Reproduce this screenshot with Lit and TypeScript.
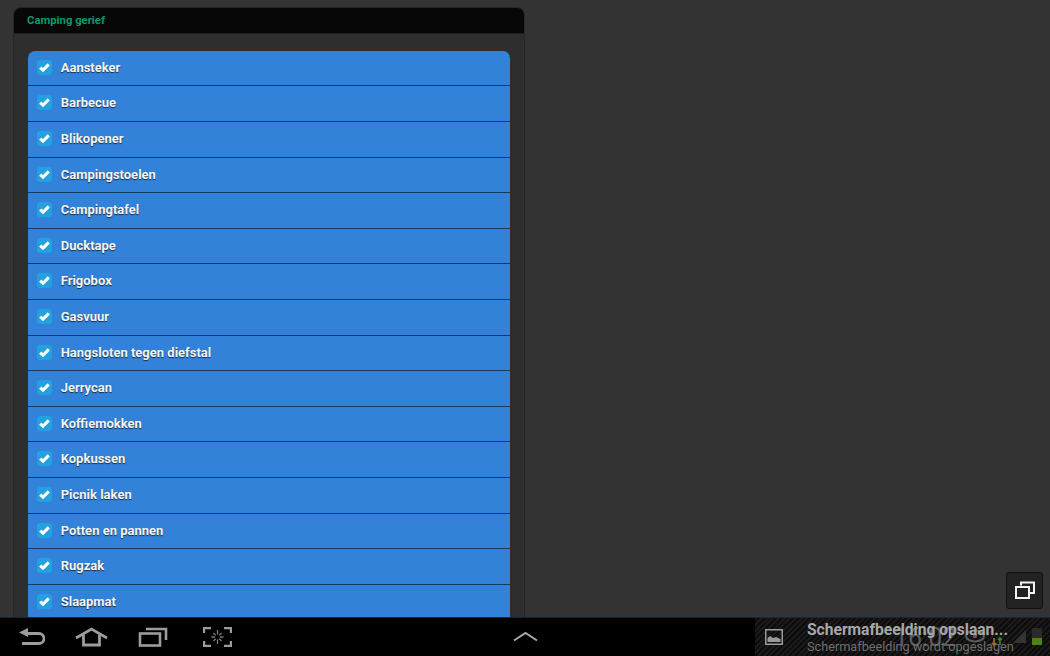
import { LitElement, html, css } from "lit";
import { customElement } from "lit/decorators.js";

const ITEMS = ["Aansteker","Barbecue","Blikopener","Campingstoelen","Campingtafel","Ducktape","Frigobox","Gasvuur","Hangsloten tegen diefstal","Jerrycan","Koffiemokken","Kopkussen","Picnik laken","Potten en pannen","Rugzak","Slaapmat"];

@customElement("app-root")
export class AppRoot extends LitElement {
  static styles = css`
    :host { display: block; width: 1050px; height: 656px; overflow: hidden; font-family: Roboto, "Liberation Sans", sans-serif; background: #333; }
    .screen { display: flex; flex-direction: column; height: 656px; }
    .main { flex: none; height: 617px; overflow: hidden; padding: 7px 0 0 13px; position: relative; box-sizing: border-box; }
    .panel { width: 512px; height: 700px; box-sizing: border-box; background: #2e2e2e; border: 1px solid #262626; border-bottom: 0; border-radius: 8px 8px 0 0; }
    .head { height: 26px; box-sizing: border-box; background: #070707; border-bottom: 1px solid #1f1f1f; border-radius: 7px 7px 0 0; padding: 0 0 1px 13px; display: flex; align-items: center; color: #0a9a68; font-size: 11.3px; font-weight: 700; }
    .list { margin: 16.8px 14px 0; display: flex; flex-direction: column; border-radius: 7px 7px 0 0; overflow: hidden; }
    .row { flex: none; height: 35.6px; box-sizing: border-box; background: #3182d8; border-bottom: 1px solid #123a63; display: flex; align-items: center; gap: 8.7px; padding: 0 0 1.4px 9px; color: #f4f4f4; font-size: 13px; font-weight: 700; text-shadow: 0 1px 1px #1c2c3e; }
    .check { width: 15px; height: 15px; border-radius: 3px; background: #22a0e0; display: flex; align-items: center; justify-content: center; flex: none; }
    .check svg { width: 15px; height: 15px; display: block; }
    .float { position: absolute; right: 7px; bottom: 8px; width: 37px; height: 37px; box-sizing: border-box; background: #222; border: 1px solid #111; border-radius: 3px; display: flex; align-items: center; justify-content: center; }
    .bar { flex: none; height: 39px; box-sizing: border-box; background: #000; border-top: 1px solid #0e2a3d; display: grid; grid-template-columns: 755px 295px; }
    .left { position: relative; display: flex; align-items: center; padding-left: 18px; }
    .left svg { flex: none; display: block; }
    .home { margin-left: 30px; }
    .recents { margin-left: 30px; }
    .capture { margin-left: 35px; }
    .up { position: absolute; left: 513px; top: 13px; }
    .tray { position: relative; overflow: hidden; background: repeating-linear-gradient(135deg, #1a1a1a 0 2px, #0c0c0c 2px 4px); display: flex; align-items: center; }
    .notif { display: flex; align-items: center; gap: 24px; padding-left: 10px; position: relative; }
    .notif-text { display: flex; flex-direction: column; }
    .t1 { font-size: 15.6px; font-weight: 700; color: #a8a8a8; line-height: 18px; white-space: nowrap; }
    .t2 { font-size: 12.7px; color: #6f6f6f; white-space: nowrap; line-height: 13px; margin-top: 0.5px; }
    .status { position: absolute; right: 0; top: 0; bottom: 0; width: 160px; color: #5c5c5c; font-size: 25px; }
    .clock { position: absolute; left: 4px; top: 6px; line-height: 28px; }
    .status svg { position: absolute; top: 0; left: 0; }
  `;

  private icon() {
    return html`<svg viewBox="0 0 15 15"><path d="M3.2 7.6 L6 10.2 L11.8 4.3" fill="none" stroke="#fff" stroke-width="3.1"/></svg>`;
  }

  render() {
    return html`<div class="screen">
      <div class="main">
        <div class="panel">
          <div class="head">Camping gerief</div>
          <div class="list">
            ${ITEMS.map((t) => html`<div class="row"><span class="check">${this.icon()}</span><span>${t}</span></div>`)}
          </div>
        </div>
        <div class="float">
          <svg width="22" height="20" viewBox="0 0 22 20" fill="none" stroke="#f2f2f2" stroke-width="2">
            <path d="M7 4.5 V1.5 H20 V12 H16"/>
            <rect x="2" y="6" width="13" height="11"/>
          </svg>
        </div>
      </div>
      <div class="bar">
        <div class="left">
          <svg width="27" height="20" viewBox="0 0 27 20" fill="none" stroke="#9c9c9c" stroke-width="2.8"><path d="M7 6.5 H21 a5 5 0 0 1 0 10 H4"/><path d="M1 5.5 L10 1 V10z" fill="#9c9c9c" stroke="none"/></svg>
          <svg class="home" width="33" height="20" viewBox="0 0 33 20" fill="none" stroke="#9c9c9c" stroke-width="2.8"><path d="M1 11 L16.5 2 L32 11"/><path d="M8.5 7.5 V18 H24.5 V7.5"/></svg>
          <svg class="recents" width="30" height="20" viewBox="0 0 30 20" fill="none" stroke="#9c9c9c" stroke-width="2.6"><rect x="2" y="6.5" width="20" height="12"/><path d="M8 2 H28 V13"/></svg>
          <svg class="capture" width="29" height="20" viewBox="0 0 29 20" fill="none" stroke="#9c9c9c" stroke-width="2.2"><path d="M1.1 6 V1.1 H8 M21 1.1 H27.9 V6 M1.1 14 V18.9 H8 M21 18.9 H27.9 V14"/><path d="M14.5 3 V7.5 M14.5 12.5 V17 M8.5 10 H12 M17 10 H20.5 M10.5 6 L12.7 8.2 M18.5 6 L16.3 8.2 M10.5 14 L12.7 11.8 M18.5 14 L16.3 11.8" stroke-width="1.3" stroke="#7c7c7c"/></svg>
          <svg class="up" width="25" height="11" viewBox="0 0 25 11" fill="none" stroke="#aaa" stroke-width="2"><path d="M1 9.5 L12.5 2 L24 9.5"/></svg>
        </div>
        <div class="tray">
          <div class="status">
            <span class="clock">16:02</span>
            <svg width="160" height="38" viewBox="0 0 160 38">
              <ellipse cx="85" cy="18" rx="9" ry="5.5" fill="none" stroke="#5c5c5c" stroke-width="2"/>
              <circle cx="85" cy="18" r="2.2" fill="#5c5c5c"/>
              <path d="M104 27 V20 M102 25 L104 27 L106 25" stroke="#a5701a" stroke-width="1.6" fill="none"/>
              <path d="M110 27 V20 M108 22 L110 20 L112 22" stroke="#3e8a1c" stroke-width="1.6" fill="none"/>
              <path d="M123 25 H136 V12z" fill="#333"/>
              <path d="M142 10 h10 v10 h-10z" fill="#2a2a2a"/>
              <rect x="142" y="20" width="10" height="7" fill="#517f1c"/>
            </svg>
          </div>
          <div class="notif">
            <svg width="18" height="16" viewBox="0 0 18 16"><rect x="0.75" y="0.75" width="16.5" height="14.5" fill="none" stroke="#9a9a9a" stroke-width="1.5"/><path d="M2.5 13 V9 L5 7 L8 9 L11 8 L15.5 10 V13z" fill="#9a9a9a"/></svg>
            <div class="notif-text">
              <span class="t1">Schermafbeelding opslaan...</span>
              <span class="t2">Schermafbeelding wordt opgeslagen</span>
            </div>
          </div>
        </div>
      </div>
    </div>`;
  }
}
